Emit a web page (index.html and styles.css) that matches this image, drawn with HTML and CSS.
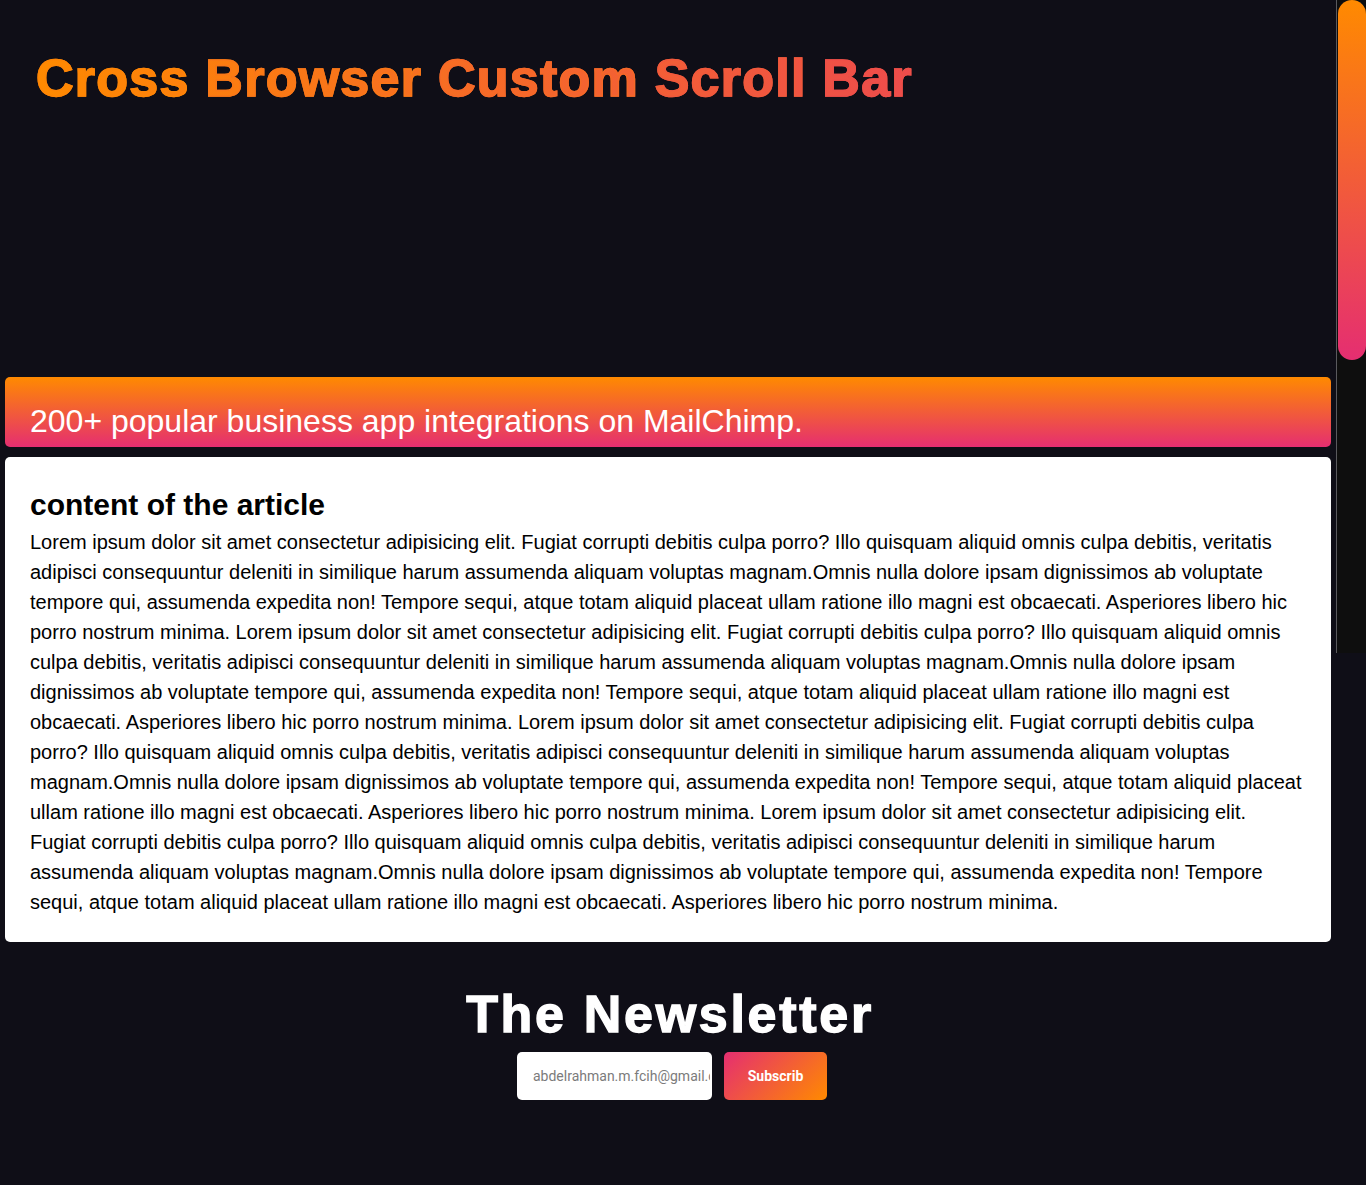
FILE: index.html
```html
<!DOCTYPE html>
<html lang="en">
<head>
<meta charset="utf-8">
<title>Cross Browser Custom Scroll Bar</title>
<link rel="stylesheet" href="styles.css">
</head>
<body>
<div class="page">
  <header class="hero">
    <h1 class="hero-title"><span class="w1">Cross</span> <span class="w2">Browser</span> <span class="w3">Custom</span> <span class="w4">Scroll</span> <span class="w5">Bar</span></h1>
  </header>
  <div class="banner">
    <h2 class="banner-text">200+ popular business app integrations on MailChimp.</h2>
  </div>
  <article class="card">
    <h3 class="card-title">content of the article</h3>
    <p class="card-text">Lorem ipsum dolor sit amet consectetur adipisicing elit. Fugiat corrupti debitis culpa porro? Illo quisquam aliquid omnis culpa debitis, veritatis adipisci consequuntur deleniti in similique harum assumenda aliquam voluptas magnam.Omnis nulla dolore ipsam dignissimos ab voluptate tempore qui, assumenda expedita non! Tempore sequi, atque totam aliquid placeat ullam ratione illo magni est obcaecati. Asperiores libero hic porro nostrum minima. Lorem ipsum dolor sit amet consectetur adipisicing elit. Fugiat corrupti debitis culpa porro? Illo quisquam aliquid omnis culpa debitis, veritatis adipisci consequuntur deleniti in similique harum assumenda aliquam voluptas magnam.Omnis nulla dolore ipsam dignissimos ab voluptate tempore qui, assumenda expedita non! Tempore sequi, atque totam aliquid placeat ullam ratione illo magni est obcaecati. Asperiores libero hic porro nostrum minima. Lorem ipsum dolor sit amet consectetur adipisicing elit. Fugiat corrupti debitis culpa porro? Illo quisquam aliquid omnis culpa debitis, veritatis adipisci consequuntur deleniti in similique harum assumenda aliquam voluptas magnam.Omnis nulla dolore ipsam dignissimos ab voluptate tempore qui, assumenda expedita non! Tempore sequi, atque totam aliquid placeat ullam ratione illo magni est obcaecati. Asperiores libero hic porro nostrum minima. Lorem ipsum dolor sit amet consectetur adipisicing elit. Fugiat corrupti debitis culpa porro? Illo quisquam aliquid omnis culpa debitis, veritatis adipisci consequuntur deleniti in similique harum assumenda aliquam voluptas magnam.Omnis nulla dolore ipsam dignissimos ab voluptate tempore qui, assumenda expedita non! Tempore sequi, atque totam aliquid placeat ullam ratione illo magni est obcaecati. Asperiores libero hic porro nostrum minima.</p>
  </article>
  <section class="newsletter">
    <h2 class="newsletter-title">The Newsletter</h2>
    <form class="newsletter-form">
      <input class="newsletter-input" type="email" placeholder="abdelrahman.m.fcih@gmail.com">
      <button class="newsletter-button" type="button">Subscrib</button>
    </form>
  </section>
</div>
<div class="scrollbar"><div class="scrollbar-thumb"></div></div>
</body>
</html>
```
FILE: styles.css
```css
html, body {
  margin: 0;
  padding: 0;
  background: #0f0e17;
}
body {
  font-family: "Liberation Sans", Arial, sans-serif;
  min-height: 1185px;
  position: relative;
  overflow: hidden;
}
.page {
  width: 1336px;
  padding: 0 5px;
  box-sizing: border-box;
}
.hero {
  height: 377px;
  box-sizing: border-box;
  padding: 46px 0 0 31px;
}
.hero-title {
  margin: 0;
  display: inline-block;
  font-size: 52px;
  line-height: 64px;
  font-weight: 700;
  letter-spacing: 1.25px;
  -webkit-text-stroke-width: 1.4px;
  background: linear-gradient(to right, #ff8a00 0%, #e52e71 100%);
  background-size: 1300px 100%;
  -webkit-background-clip: text;
  background-clip: text;
  color: transparent;
  -webkit-text-fill-color: transparent;
}
.hero-title .w1 { -webkit-text-stroke-color: #fe8506; }
.hero-title .w2 { -webkit-text-stroke-color: #f97718; }
.hero-title .w3 { -webkit-text-stroke-color: #f66928; }
.hero-title .w4 { -webkit-text-stroke-color: #f1593c; }
.hero-title .w5 { -webkit-text-stroke-color: #ee4f48; }
.banner {
  height: 70px;
  border-radius: 5px;
  background: linear-gradient(to bottom, #ff8a00, #e52e71);
  box-sizing: border-box;
  padding: 24px 25px 0;
}
.banner-text {
  margin: 0;
  color: #fff;
  font-weight: 400;
  font-size: 32px;
  line-height: 40px;
}
.card {
  margin-top: 10px;
  background: #fff;
  border-radius: 5px;
  padding: 29px 25px 25px;
  height: 485px;
  box-sizing: border-box;
}
.card-title {
  margin: 0 0 3px;
  font-size: 30px;
  line-height: 38px;
  font-weight: 700;
  color: #000;
}
.card-text {
  margin: 0;
  font-size: 20px;
  line-height: 30px;
  color: #000;
}
.newsletter {
  display: flex;
  flex-direction: column;
  align-items: center;
  padding-top: 40px;
}
.newsletter-title {
  margin: 0 0 0 4px;
  color: #fff;
  font-size: 52px;
  line-height: 64px;
  font-weight: 700;
  letter-spacing: 2.7px;
  -webkit-text-stroke: 1.4px #fff;
}
.newsletter-form {
  display: flex;
  gap: 12px;
  margin-top: 6px;
  margin-left: 8px;
}
.newsletter-input {
  width: 195px;
  height: 48px;
  box-sizing: border-box;
  border: none;
  border-radius: 5px;
  background: #fff;
  padding: 0 2px 0 16px;
  font-family: Roboto, "Liberation Sans", sans-serif;
  font-size: 14px;
  outline: none;
}
.newsletter-input::placeholder {
  color: #7b7b7b;
}
.newsletter-button {
  width: 103px;
  height: 48px;
  border: none;
  border-radius: 5px;
  background: linear-gradient(135deg, #e52e71, #ff8a00);
  color: #fff;
  font-family: Roboto, "Liberation Sans", sans-serif;
  font-weight: 700;
  font-size: 14px;
}
.scrollbar {
  position: absolute;
  top: 0;
  right: 0;
  width: 30px;
  height: 653px;
  background: #0e0e0e;
  border-left: 1px solid #5a5a5e;
  box-sizing: border-box;
}
.scrollbar-thumb {
  margin-left: 1px;
  width: 28px;
  height: 360px;
  border-radius: 14px;
  background: linear-gradient(to bottom, #ff8a00, #e52e71);
}
```
